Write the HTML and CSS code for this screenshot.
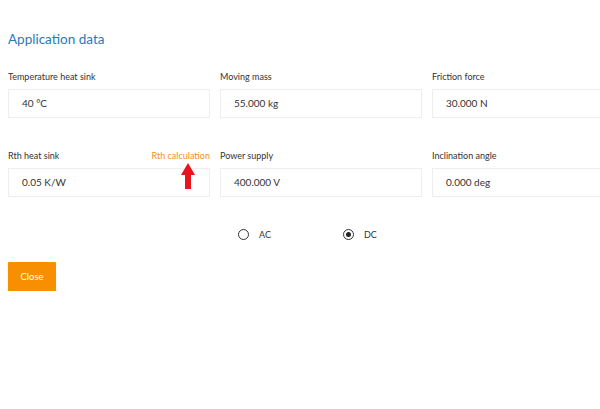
FILE: index.html
```html
<!DOCTYPE html>
<html lang="en">
<head>
    <meta charset="UTF-8">
    <title>Application data</title>
    <link rel="stylesheet" href="styles.css">
</head>
<body>
    <div class="dialog">
        <h2>Application data</h2>

        <div class="fields">
            <div class="field">
                <div class="label-row"><span>Temperature heat sink</span></div>
                <div class="value">40 °C</div>
            </div>
            <div class="field">
                <div class="label-row"><span>Moving mass</span></div>
                <div class="value">55.000 kg</div>
            </div>
            <div class="field">
                <div class="label-row"><span>Friction force</span></div>
                <div class="value">30.000 N</div>
            </div>

            <div class="field">
                <div class="label-row">
                    <span>Rth heat sink</span>
                    <a class="link">Rth calculation</a>
                </div>
                <div class="value">0.05 K/W</div>
                <svg class="arrow" width="14" height="27" viewBox="0 0 14 27">
                    <polygon points="7,0 14,12 10,12 10,26 4,26 4,12 0,12" fill="#e8141c"/>
                </svg>
            </div>
            <div class="field">
                <div class="label-row"><span>Power supply</span></div>
                <div class="value">400.000 V</div>
            </div>
            <div class="field">
                <div class="label-row"><span>Inclination angle</span></div>
                <div class="value">0.000 deg</div>
            </div>
        </div>

        <div class="radios">
            <label class="radio"><span class="dot"></span>AC</label>
            <label class="radio"><span class="dot checked"></span>DC</label>
        </div>

        <button class="btn">Close</button>
    </div>
</body>
</html>
```

FILE: styles.css
```css
body {
    margin: 0;
    background: #fff;
    font-family: Lato, "Open Sans", sans-serif;
    color: #333;
    overflow: hidden;
}
.dialog {
    padding: 31px 0 0 8px;
}
h2 {
    margin: 0 0 24px;
    font-size: 13.5px;
    font-weight: 400;
    color: #2a78c0;
}
.fields {
    display: grid;
    grid-template-columns: 202px 202px 202px;
    column-gap: 10px;
    row-gap: 32px;
}
.field {
    position: relative;
}
.label-row {
    display: flex;
    justify-content: space-between;
    font-size: 9px;
    line-height: 12px;
    margin-bottom: 6px;
}
.link {
    color: #f0901e;
    cursor: pointer;
}
.value {
    height: 27px;
    border: 1px solid #eeeeee;
    padding-left: 13px;
    font-size: 10px;
    line-height: 27px;
}
.arrow {
    position: absolute;
    left: 173px;
    top: 13px;
}
.radios {
    display: flex;
    gap: 72px;
    padding-left: 230px;
    margin-top: 32px;
}
.radio {
    display: flex;
    align-items: center;
    gap: 10px;
    font-size: 9px;
}
.dot {
    width: 9px;
    height: 9px;
    border: 1.5px solid #333;
    border-radius: 50%;
    position: relative;
}
.dot.checked::after {
    content: "";
    position: absolute;
    left: 2px;
    top: 2px;
    width: 5px;
    height: 5px;
    border-radius: 50%;
    background: #222;
}
.btn {
    margin-top: 22px;
    width: 48px;
    height: 29px;
    border: none;
    border-radius: 1px;
    background: #f78f00;
    color: #fff;
    font-family: Lato, sans-serif;
    font-size: 9.5px;
    box-shadow: 0 1px 1px rgba(0, 0, 0, 0.2);
}
```
